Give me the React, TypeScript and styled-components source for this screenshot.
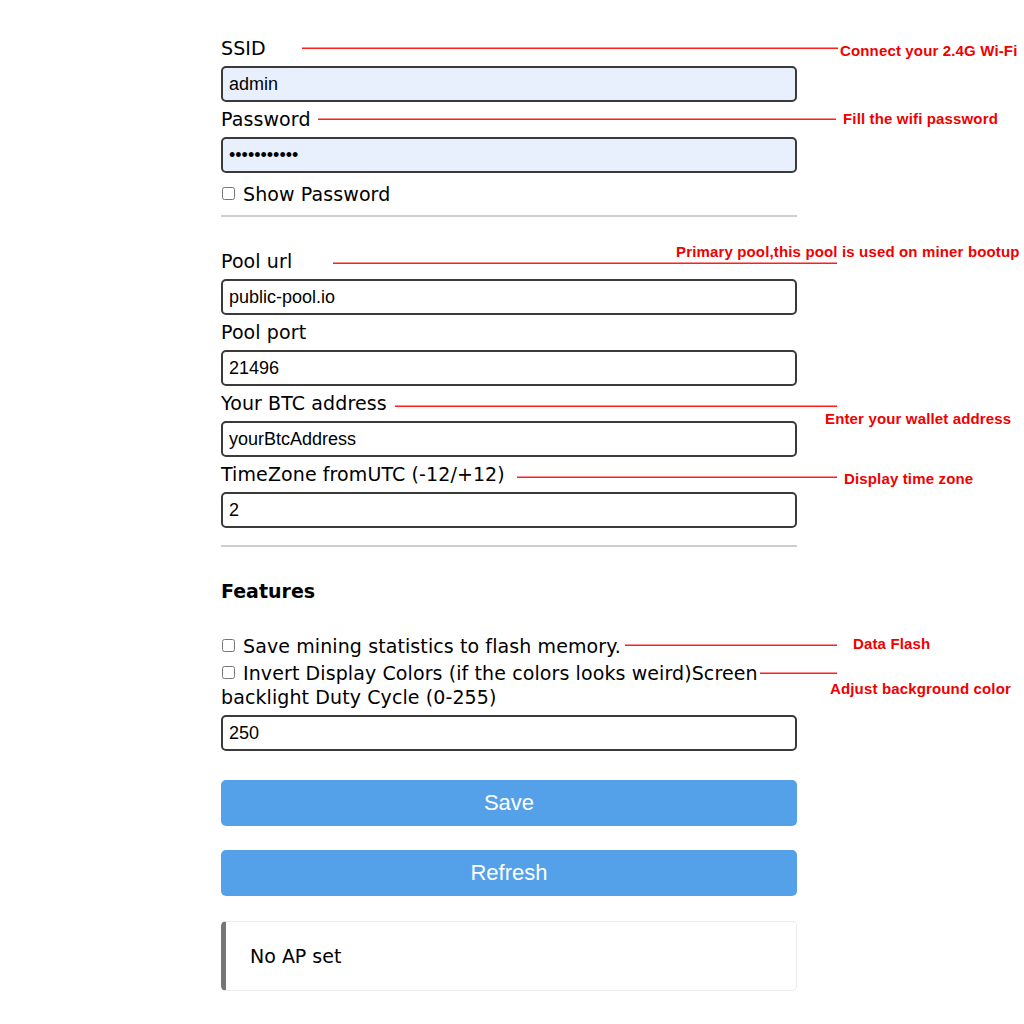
import React from "react";
import styled, { createGlobalStyle } from "styled-components";

const GlobalStyle = createGlobalStyle`
  html, body {
    margin: 0;
    padding: 0;
    background: #ffffff;
  }
  body {
    font-family: "DejaVu Sans", Verdana, sans-serif;
    color: #000;
  }
`;

const Page = styled.div`
  position: relative;
  width: 1024px;
  min-height: 1024px;
  padding: 31px 0 0 221px;
  box-sizing: border-box;
`;

const Form = styled.form`
  width: 576px;
  display: flex;
  flex-direction: column;
`;

const Label = styled.label`
  display: block;
  font-size: 19px;
  letter-spacing: 0.1px;
  line-height: 22px;
  margin: 6px 0 7px;
`;

const TextInput = styled.input<{ $filled?: boolean; $mt?: number }>`
  box-sizing: border-box;
  width: 100%;
  height: 36px;
  margin: ${(p) => p.$mt ?? 0}px 0 0;
  padding: 0 6px;
  border: 2px solid #3a3a3a;
  border-radius: 5px;
  background: ${(p) => (p.$filled ? "#e8f0fe" : "#ffffff")};
  font-family: "Liberation Sans", Arial, sans-serif;
  font-size: 18px;
  color: #000;
  outline: none;
`;

const CheckRow = styled.div<{ $mt?: number }>`
  font-size: 19px;
  letter-spacing: 0.1px;
  line-height: 24px;
  margin-top: ${(p) => p.$mt ?? 0}px;
`;

const Check = styled.input`
  width: 13px;
  height: 13px;
  margin: 0 8px 0 1px;
  vertical-align: 1px;
`;

const Rule = styled.hr<{ $mt: number; $mb: number }>`
  width: 100%;
  height: 2px;
  border: 0;
  background: #cfcfcf;
  margin: ${(p) => p.$mt}px 0 ${(p) => p.$mb}px;
`;

const Heading = styled.h3`
  font-size: 19px;
  font-weight: bold;
  line-height: 22px;
  margin: 33px 0 0;
`;

const Button = styled.button<{ $mt: number }>`
  width: 100%;
  height: 46px;
  margin-top: ${(p) => p.$mt}px;
  border: 0;
  border-radius: 5px;
  background: #54a1ea;
  color: #ffffff;
  font-family: "Liberation Sans", Arial, sans-serif;
  font-size: 22px;
  cursor: pointer;
`;

const Status = styled.div`
  box-sizing: border-box;
  margin-top: 25px;
  height: 70px;
  display: flex;
  align-items: center;
  padding-left: 24px;
  border: 1px solid #ececec;
  border-left: 5px solid #767676;
  border-radius: 5px;
  font-size: 19px;
`;

/* Red call-outs laid over the form */
const Pointer = styled.div`
  position: absolute;
  height: 2px;
  background: linear-gradient(#ff8c8c 0 40%, #ff1f1f 40% 100%);
`;

const Note = styled.span`
  position: absolute;
  transform: translateY(-50%);
  white-space: nowrap;
  font-family: "Liberation Sans", Arial, sans-serif;
  font-weight: bold;
  font-size: 15px;
  letter-spacing: 0.15px;
  color: #f00000;
`;

type Callout = { x1: number; x2: number; y: number; tx: number; ty: number; text: string };

const callouts: Callout[] = [
  { x1: 302, x2: 838, y: 48, tx: 840, ty: 50, text: "Connect your 2.4G Wi-Fi" },
  { x1: 318, x2: 836, y: 119, tx: 843, ty: 118, text: "Fill the wifi password" },
  { x1: 333, x2: 837, y: 263, tx: 676, ty: 251, text: "Primary pool,this pool is used on miner bootup" },
  { x1: 395, x2: 837, y: 406, tx: 825, ty: 418, text: "Enter your wallet address" },
  { x1: 517, x2: 837, y: 477, tx: 844, ty: 478, text: "Display time zone" },
  { x1: 625, x2: 837, y: 645, tx: 853, ty: 643, text: "Data Flash" },
  { x1: 760, x2: 837, y: 673, tx: 830, ty: 688, text: "Adjust background color" },
];

export default function App() {
  return (
    <>
      <GlobalStyle />
      <Page>
        <Form onSubmit={(e) => e.preventDefault()}>
          <Label htmlFor="ssid">SSID</Label>
          <TextInput id="ssid" $filled defaultValue="admin" />
          <Label htmlFor="pass">Password</Label>
          <TextInput id="pass" $filled type="password" defaultValue="12345678901" />
          <CheckRow $mt={9}>
            <Check type="checkbox" id="show" />
            <label htmlFor="show">Show Password</label>
          </CheckRow>
          <Rule $mt={9} $mb={27} />

          <Label htmlFor="pool">Pool url</Label>
          <TextInput id="pool" defaultValue="public-pool.io" />
          <Label htmlFor="port">Pool port</Label>
          <TextInput id="port" defaultValue="21496" />
          <Label htmlFor="btc">Your BTC address</Label>
          <TextInput id="btc" defaultValue="yourBtcAddress" />
          <Label htmlFor="tz">TimeZone fromUTC (-12/+12)</Label>
          <TextInput id="tz" defaultValue="2" />
          <Rule $mt={17} $mb={0} />

          <Heading>Features</Heading>
          <CheckRow $mt={32}>
            <Check type="checkbox" id="flash" />
            <label htmlFor="flash">Save mining statistics to flash memory.</label>
          </CheckRow>
          <CheckRow $mt={3}>
            <Check type="checkbox" id="invert" />
            <label htmlFor="invert">
              Invert Display Colors (if the colors looks weird)Screen backlight Duty Cycle (0-255)
            </label>
          </CheckRow>
          <TextInput id="bright" defaultValue="250" $mt={6} />

          <Button type="submit" $mt={29}>Save</Button>
          <Button type="button" $mt={24}>Refresh</Button>

          <Status>No AP set</Status>
        </Form>

        {callouts.map((c) => (
          <React.Fragment key={c.text}>
            <Pointer style={{ left: c.x1, top: c.y - 1, width: c.x2 - c.x1 }} />
            <Note style={{ left: c.tx, top: c.ty }}>{c.text}</Note>
          </React.Fragment>
        ))}
      </Page>
    </>
  );
}
